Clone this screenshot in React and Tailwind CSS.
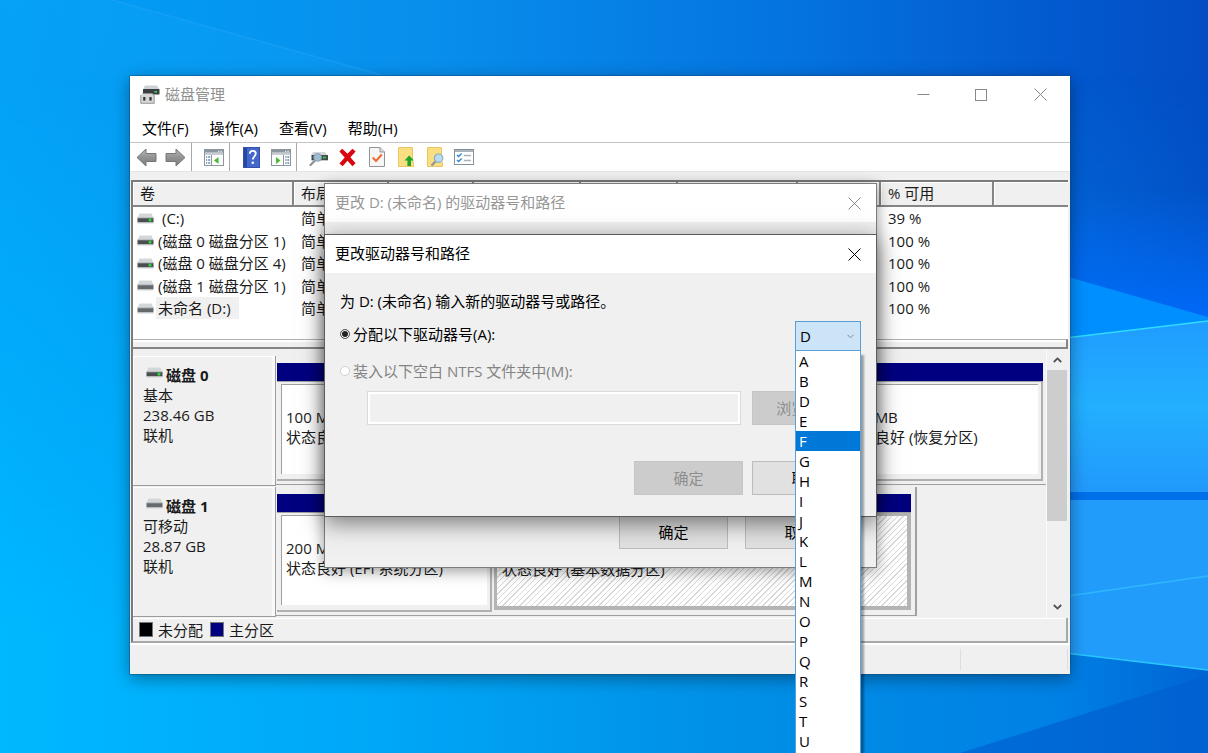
import { useState } from "react";

const FONT = "font-['Open_Sans','Noto_Sans_CJK_SC',sans-serif]";

function Wallpaper() {
  return (
    <svg className="absolute inset-0 h-full w-full" viewBox="0 0 1208 753" preserveAspectRatio="none" aria-hidden="true">
      <defs>
        <linearGradient id="base" x1="0" y1="0" x2="1" y2="0">
          <stop offset="0" stopColor="#00a0f6" />
          <stop offset="0.35" stopColor="#088fec" />
          <stop offset="0.65" stopColor="#0474e0" />
          <stop offset="0.88" stopColor="#0359cf" />
          <stop offset="1" stopColor="#034dc3" />
        </linearGradient>
        <linearGradient id="low" x1="0" y1="0" x2="1" y2="0">
          <stop offset="0" stopColor="#00b8ff" />
          <stop offset="0.3" stopColor="#00a8f8" />
          <stop offset="0.6" stopColor="#0090e6" />
          <stop offset="0.88" stopColor="#0080e4" />
          <stop offset="1" stopColor="#0064d4" />
        </linearGradient>
        <linearGradient id="fade" x1="0" y1="0" x2="0" y2="1">
          <stop offset="0.1" stopColor="#fff" stopOpacity="0" />
          <stop offset="0.85" stopColor="#fff" />
        </linearGradient>
        <mask id="down"><rect width="1208" height="753" fill="url(#fade)" /></mask>
        <linearGradient id="corner" x1="0" y1="0" x2="0" y2="1">
          <stop offset="0" stopColor="#20b0ff" stopOpacity="0.14" />
          <stop offset="1" stopColor="#20b0ff" stopOpacity="0" />
        </linearGradient>
        <linearGradient id="glow" x1="0" y1="0" x2="0" y2="1">
          <stop offset="0" stopColor="#006cff" stopOpacity="0" />
          <stop offset="1" stopColor="#006cff" />
        </linearGradient>
        <linearGradient id="pane" x1="0" y1="0" x2="0" y2="1">
          <stop offset="0" stopColor="#209cff" />
          <stop offset="0.5" stopColor="#22b0ff" />
          <stop offset="1" stopColor="#2299fc" />
        </linearGradient>
      </defs>
      <rect width="1208" height="753" fill="url(#base)" />
      <rect width="1208" height="753" fill="url(#low)" mask="url(#down)" />
      <path d="M0 0H112L385 76V500H0Z" fill="url(#corner)" />
      <path d="M112 0L385 76" stroke="#30a8f8" strokeWidth="1.5" opacity="0.35" />
      <rect x="1040" y="190" width="168" height="150" fill="url(#glow)" />
      <path d="M1040 269L1208 317V322L1040 342Z" fill="#008fff" />
      <path d="M1040 341L1208 321V492H1040Z" fill="url(#pane)" />
      <path d="M1040 341L1208 321" stroke="#2fdcff" strokeWidth="1.5" />
      <rect x="1040" y="492" width="168" height="8" fill="#0070ea" />
      <path d="M1040 500H1208V670L1040 650Z" fill="#229cfb" />
      <path d="M1040 600L1208 576" stroke="#2db8ff" strokeWidth="1.5" />
      <path d="M1040 650L1208 670" stroke="#28c8ff" strokeWidth="1.5" />
      <path d="M960 753L1208 675V753Z" fill="#005fd0" opacity="0.7" />
    </svg>
  );
}

function CloseIcon({ color }) {
  return (
    <svg width="13" height="13" viewBox="0 0 13 13" fill="none" stroke={color} strokeWidth="1" aria-hidden="true">
      <path d="M0.5 0.5L12.5 12.5M12.5 0.5L0.5 12.5" />
    </svg>
  );
}

function DriveIcon({ led }) {
  return (
    <svg width="17" height="11" viewBox="0 0 17 11" className="shrink-0" aria-hidden="true">
      <path d="M2.5 0.5H14.5L16.5 5H0.5Z" fill="#d3d7da" />
      <rect x="0.5" y="5" width="16" height="4.5" fill={led ? "#4b4e50" : "#66696b"} />
      <path d="M0.5 4.8H16.5" stroke="#b4b8ba" />
      <path d="M0.5 10H16.5" stroke="#d0d3d4" />
      {led && <path d="M11.4 7.2H14.6M13 5.6V8.8" stroke="#28e53c" strokeWidth="1.3" />}
    </svg>
  );
}

function AppIcon() {
  return (
    <svg width="20" height="19" viewBox="0 0 20 19" aria-hidden="true">
      <path d="M5 0.5H17L19.5 4.5H3Z" fill="#cfd2d4" />
      <rect x="3" y="4" width="16.5" height="5.5" rx="0.5" fill="#3b3e40" />
      <path d="M14.4 6.8H17" stroke="#2ce04a" strokeWidth="1.6" />
      <path d="M2.5 8.5H12.5V10H14.5V18.5H0.5V10H2.5Z" fill="#d6d6d6" />
      <path d="M0.8 10V18.3H14.2V10" fill="none" stroke="#9a9a9a" />
      <path d="M2.5 8.5H12.5" stroke="#8f8f8f" />
      <rect x="3.2" y="12" width="2.2" height="3.6" fill="#333" />
      <rect x="9.4" y="12" width="2.2" height="3.6" fill="#333" />
    </svg>
  );
}

function ArrowIcon({ flip }) {
  return (
    <svg width="21" height="19" viewBox="0 0 21 19" aria-hidden="true">
      <defs>
        <linearGradient id={flip ? "arR" : "arL"} x1="0" y1="0" x2="0" y2="1">
          <stop offset="0" stopColor="#b8b8b8" />
          <stop offset="0.5" stopColor="#929292" />
          <stop offset="1" stopColor="#7e7e7e" />
        </linearGradient>
      </defs>
      <path
        d={flip ? "M20 9.5L11 1V5.5H1V13.5H11V18Z" : "M1 9.5L10 1V5.5H20V13.5H10V18Z"}
        fill={flip ? "url(#arR)" : "url(#arL)"}
        stroke="#777"
        strokeLinejoin="round"
      />
    </svg>
  );
}

function PaneIcon({ flip }) {
  return (
    <svg width="20" height="19" viewBox="0 0 20 19" aria-hidden="true">
      <rect x="0.5" y="1.5" width="19" height="16" fill="#fff" stroke="#8b979f" />
      <rect x="1" y="2" width="18" height="2.6" fill="#8a979f" />
      <path d="M14 3.3H15.2M16.4 3.3H17.8" stroke="#fff" />
      <path d="M1 6H19" stroke="#b8c0c6" strokeWidth="1.6" />
      {flip ? (
        <>
          <path d="M12.5 7V17.5" stroke="#8b979f" />
          <path d="M5 9V16L9.5 12.5Z" fill="#4cb832" />
          <path d="M14.3 9H15.6M14.3 12H15.6M14.3 15H15.6M16.4 9H18.2M16.4 12H18.2M16.4 15H18.2" stroke="#5b84a5" strokeWidth="1.4" />
        </>
      ) : (
        <>
          <path d="M7.5 7V17.5" stroke="#8b979f" />
          <path d="M14.5 9V16L10 12.5Z" fill="#4cb832" />
          <path d="M2 9H3.2M2 12H3.2M2 15H3.2M4.2 9H6.2M4.2 12H6.2M4.2 15H6.2" stroke="#5b84a5" strokeWidth="1.4" />
        </>
      )}
    </svg>
  );
}

function HelpIcon() {
  return (
    <svg width="17" height="21" viewBox="0 0 17 21" aria-hidden="true">
      <rect x="0.5" y="0.5" width="16" height="20" fill="#4467cc" stroke="#3450a8" />
      <rect x="1" y="1" width="3" height="19" fill="#2747a5" />
      <path d="M6.8 6.8C6.8 4.6 8.2 3.8 9.7 3.8C11.6 3.8 12.8 4.9 12.8 6.6C12.8 9.2 9.8 9.4 9.8 12.6" fill="none" stroke="#fff" strokeWidth="1.8" />
      <circle cx="9.8" cy="15.8" r="1.3" fill="#fff" />
    </svg>
  );
}

function DriveSearchIcon() {
  return (
    <svg width="20" height="19" viewBox="0 0 20 19" aria-hidden="true">
      <path d="M4 4H16L18.5 7.5H2Z" fill="#d5d8da" />
      <rect x="2.5" y="7" width="16.5" height="5" fill="#45494b" />
      <path d="M2.5 12.5H19" stroke="#c4c8ca" />
      <path d="M14 9.5H17" stroke="#28d044" strokeWidth="1.8" />
      <path d="M6 12.5L1.5 17" stroke="#8a8f93" strokeWidth="2.2" strokeLinecap="round" />
      <circle cx="8.6" cy="9.4" r="3.9" fill="#9dbdd2" stroke="#8aa0b0" />
    </svg>
  );
}

function DeleteIcon() {
  return (
    <svg width="19" height="19" viewBox="0 0 19 19" aria-hidden="true">
      <path d="M4.2 0.8L9.5 5.8L14.4 0.8L17.6 3.4L12.4 9.2L17.6 15.2L14.4 18.2L9.5 12.7L4.6 18.2L1.4 15.4L6.7 9.4L1.4 3.6Z" fill="#d8060f" />
    </svg>
  );
}

function CheckDocIcon() {
  return (
    <svg width="16" height="20" viewBox="0 0 16 20" aria-hidden="true">
      <path d="M0.5 0.5H11L15.5 5V19.5H0.5Z" fill="#f6f6f6" stroke="#939393" />
      <path d="M11 0.5V5H15.5" fill="#ddd" stroke="#939393" />
      <path d="M3.8 10.5L7 14L12.8 7.5" fill="none" stroke="#ee6a32" strokeWidth="2" />
    </svg>
  );
}

function FolderUpIcon() {
  return (
    <svg width="18" height="20" viewBox="0 0 18 20" aria-hidden="true">
      <path d="M1.5 0.5H15.5V15.5H16.5V19.5H1.5Z" fill="#f9de82" stroke="#e8c768" />
      <path d="M12.2 8.5L16.8 13.5H14V19H10.4V13.5H7.6Z" fill="#1fa326" />
    </svg>
  );
}

function FolderSearchIcon() {
  return (
    <svg width="18" height="20" viewBox="0 0 18 20" aria-hidden="true">
      <path d="M1.5 0.5H15.5V15.5H16.5V19.5H1.5Z" fill="#f9de82" stroke="#e8c768" />
      <path d="M10 14L5.5 18.5" stroke="#8d9296" strokeWidth="2.2" />
      <circle cx="12.6" cy="11.2" r="4.2" fill="#b9dcf2" stroke="#8fadc2" strokeWidth="1.2" />
    </svg>
  );
}

function ChecklistIcon() {
  return (
    <svg width="20" height="16" viewBox="0 0 20 16" aria-hidden="true">
      <rect x="0.5" y="0.5" width="19" height="15" fill="#fff" stroke="#84909a" />
      <rect x="1" y="1" width="18" height="2" fill="#aab4bc" />
      <path d="M3 6L4.6 7.5L7.6 4.4M3 11L4.6 12.5L7.6 9.4" fill="none" stroke="#2f86dc" strokeWidth="1.4" />
      <path d="M10 6.5H17M10 11.5H17" stroke="#aab1b6" strokeWidth="1.4" />
    </svg>
  );
}

function ToolButton({ label, children }) {
  return (
    <button type="button" aria-label={label} className="flex h-7 w-[29px] items-center justify-center">
      {children}
    </button>
  );
}

function ToolSeparator() {
  return <div className="ml-px h-7 w-2 border-l border-[#a8a8a8]" />;
}

const COLUMNS = ["卷", "布局", "类型", "文件系统", "状态", "容量", "可用空间", "% 可用", ""];
const VOLUMES = [
  { name: "(C:)", led: true, free: "39 %", indent: true },
  { name: "(磁盘 0 磁盘分区 1)", led: true, free: "100 %" },
  { name: "(磁盘 0 磁盘分区 4)", led: true, free: "100 %" },
  { name: "(磁盘 1 磁盘分区 1)", led: false, free: "100 %" },
  { name: "未命名 (D:)", led: false, free: "100 %", selected: true },
];

function VolumeTable() {
  return (
    <div className="ml-px mr-0.5 border-l-2 border-t-2 border-[#7b7b7b] bg-white">
      <table className="w-full table-fixed border-collapse text-left whitespace-nowrap">
        <colgroup>
          <col className="w-[161px]" />
          <col className="w-[95px]" />
          <col className="w-[85px]" />
          <col className="w-[107px]" />
          <col className="w-[97px]" />
          <col className="w-[120px]" />
          <col className="w-[83px]" />
          <col className="w-[113px]" />
          <col />
        </colgroup>
        <thead>
          <tr className="h-[25px]">
            {COLUMNS.map((c, i) => (
              <th key={i} scope="col" className="p-0 font-normal">
                <div
                  className={
                    "h-[25px] overflow-hidden border-b-2 border-[#858585] bg-[#f0f0f0] pl-[7px] leading-[23px] shadow-[inset_1px_1px_0_#fff] " +
                    (i < 8 ? "border-r-2" : "")
                  }
                >
                  {c}
                </div>
              </th>
            ))}
          </tr>
        </thead>
        <tbody className="leading-[22px]">
          {VOLUMES.map((v) => (
            <tr key={v.name} className="h-[22px] even:h-[23px]">
              <td className="p-0">
                <div className="flex items-center gap-0.5 pl-1">
                  <DriveIcon led={v.led} />
                  <span className={v.selected ? "bg-[#f0f0f0] pl-0.5 pr-2" : v.indent ? "pl-1.5" : "pl-0.5"}>{v.name}</span>
                </div>
              </td>
              <td className="p-0 pl-[7px]">简单</td>
              <td className="p-0" />
              <td className="p-0" />
              <td className="p-0" />
              <td className="p-0" />
              <td className="p-0" />
              <td className="p-0 pl-[7px]">{v.free}</td>
              <td className="p-0" />
            </tr>
          ))}
        </tbody>
      </table>
      <div className="h-5" />
      <div className="h-[10px] border-b-2 border-r-2 border-t border-[#858585] border-t-[#b0b0b0] bg-[#f0f0f0] shadow-[inset_0_2px_0_#fff]" />
    </div>
  );
}

function Partition({ size, status, selected, className }) {
  return (
    <div className={"flex flex-col " + className}>
      <div className="h-[19px] border-b border-[#a0a0a0] bg-[#000080]" />
      {selected ? (
        <div className="flex h-[97px] border-[3px] border-[#b4b4b4] border-b-4 border-r-4">
          <div className="flex-1 bg-[repeating-linear-gradient(135deg,#fff_0px,#fff_3px,#d8d8d8_3px,#d8d8d8_4px)] pl-[5px] pt-[23px] leading-5 whitespace-nowrap">
            <div>{size}</div>
            <div>{status}</div>
          </div>
        </div>
      ) : (
        <div className="flex h-[99px] border-b-2 border-r-2 border-[#b0b0b0] pb-[5px] pl-1 pr-[3px] pt-0.5">
          <div className="flex-1 overflow-hidden border-l border-t border-[#a0a0a0] bg-white pl-1 pt-[22px] leading-5 whitespace-nowrap">
            <div>{size}</div>
            <div>{status}</div>
          </div>
        </div>
      )}
    </div>
  );
}

function DiskRow({ name, led, kind, capacity, children, className }) {
  return (
    <div className="flex h-[131px] items-start">
      <div className="h-[130px] w-[143px] shrink-0 border-b border-r border-[#9c9c9c] pl-2.5 pt-[9px] leading-5 shadow-[inset_1px_1px_0_#fff,inset_-3px_0_0_#f8f8f8]">
        <div className="flex items-center gap-[3px] pl-[3px] font-bold">
          <div className="pb-1.5">
            <DriveIcon led={led} />
          </div>
          {name}
        </div>
        <div>{kind}</div>
        <div>{capacity}</div>
        <div>联机</div>
      </div>
      <div className={"flex h-[129px] gap-0.5 border-b border-[#a0a0a0] pl-px pt-[7px] " + className}>{children}</div>
    </div>
  );
}

function DiskGraph() {
  return (
    <div className="ml-px mr-0.5 flex border-l-2 border-[#7b7b7b] bg-[#f0f0f0]">
      <div className="flex-1 pt-[7px]">
        <DiskRow name="磁盘 0" led kind="基本" capacity="238.46 GB" className="flex-1 pr-[3px]">
          <Partition size="100 MB" status="状态良好 (EFI 系统分区)" className="w-[215px]" />
          <Partition size="" status="" className="flex-1" />
          <Partition size="505 MB" status="状态良好 (恢复分区)" className="w-[207px]" />
        </DiskRow>
        <DiskRow name="磁盘 1" kind="可移动" capacity="28.87 GB" className="mr-[129px] flex-1 border-r-2 pr-1">
          <Partition size="200 MB" status="状态良好 (EFI 系统分区)" className="w-[215px]" />
          <Partition size="28.67 GB NTFS" status="状态良好 (基本数据分区)" selected className="flex-1" />
        </DiskRow>
      </div>
      <div className="flex w-[22px] flex-col items-center border-l border-[#fafafa] pr-px">
        <button type="button" aria-label="向上滚动" className="flex h-[21px] w-5 items-center justify-center">
          <svg width="9" height="6" viewBox="0 0 9 6" fill="none" stroke="#505050" strokeWidth="1.8" aria-hidden="true">
            <path d="M0.8 5L4.5 1.4L8.2 5" />
          </svg>
        </button>
        <div className="h-[151px] w-5 bg-[#cdcdcd]" />
        <div className="flex-1" />
        <button type="button" aria-label="向下滚动" className="flex h-[22px] w-5 items-center justify-center">
          <svg width="9" height="6" viewBox="0 0 9 6" fill="none" stroke="#505050" strokeWidth="1.8" aria-hidden="true">
            <path d="M0.8 1L4.5 4.6L8.2 1" />
          </svg>
        </button>
      </div>
    </div>
  );
}

function DialogTitle({ children, active }) {
  return (
    <div className="flex h-[38px] items-center justify-between bg-white pl-2.5">
      <h2 className={"pb-0.5 " + (active ? "text-black" : "text-[#979797]")}>{children}</h2>
      <button type="button" aria-label="关闭" className="flex h-[38px] w-[43px] items-center justify-center">
        <CloseIcon color={active ? "#000" : "#8a8a8a"} />
      </button>
    </div>
  );
}

function PushButton({ children, disabled }) {
  return (
    <button
      type="button"
      disabled={disabled}
      className={
        "h-[34px] w-[109px] shrink-0 border " +
        (disabled ? "border-[#c6c6c6] bg-[#cccccc] text-[#8e8e8e]" : "border-[#bcbcbc] bg-[#e1e1e1] text-black")
      }
    >
      {children}
    </button>
  );
}

const LETTERS = "ABDEFGHIJKLMNOPQRSTUVWXYZ".split("");

function LetterPicker() {
  const [letter, setLetter] = useState("D");
  return (
    <div className="relative z-10 w-[66px]">
      <select
        aria-label="驱动器号"
        value={letter}
        onChange={(e) => setLetter(e.target.value)}
        className="block h-[30px] w-full appearance-none border border-[#5a9fd4] bg-[#cce4f7] pl-1 text-black"
      >
        {LETTERS.map((l) => (
          <option key={l}>{l}</option>
        ))}
      </select>
      <svg className="pointer-events-none absolute right-[7px] top-[13px]" width="7" height="5" viewBox="0 0 7 5" fill="none" stroke="#7d8a96" aria-hidden="true">
        <path d="M0.5 0.8L3.5 3.8L6.5 0.8" />
      </svg>
      <ul role="listbox" aria-label="可用驱动器号" className="absolute left-0 top-[30px] w-full border-x border-[#5aa0dc] bg-white leading-5 shadow-[3px_4px_2px_rgba(0,0,0,0.35)]">
        {LETTERS.map((l) => (
          <li key={l} role="option" aria-selected={l === "F"} className={"h-5 pl-[3px] " + (l === "F" ? "bg-[#0078d7] text-white" : "text-black")}>
            {l}
          </li>
        ))}
      </ul>
    </div>
  );
}

const RADIO =
  "h-2.5 w-2.5 appearance-none rounded-full border border-[#666] bg-white checked:bg-[#222] checked:shadow-[inset_0_0_0_1px_#fff] disabled:border-[#d0d0d0]";

export default function App() {
  return (
    <div className={"relative min-h-screen overflow-hidden bg-[#0090ee] pb-[79px] pl-[130px] pr-[138px] pt-[76px] text-[15px] leading-5 text-[#1a1a1a] " + FONT}>
      <Wallpaper />
      <main className="relative bg-[#f0f0f0] shadow-[0_0_0_1px_rgba(20,70,120,0.45),0_4px_16px_rgba(0,0,0,0.4)]">
        <header className="flex h-[37px] items-center bg-white pl-2.5">
          <AppIcon />
          <h1 className="ml-[5px] flex-1 pb-0.5 text-[#8f8f8f]">磁盘管理</h1>
          <button type="button" aria-label="最小化" className="flex h-9 w-[58px] items-center justify-center">
            <svg width="13" height="13" viewBox="0 0 13 13" stroke="#8a8a8a" aria-hidden="true"><path d="M0.5 6.5H12.5" /></svg>
          </button>
          <button type="button" aria-label="最大化" className="flex h-9 w-[58px] items-center justify-center">
            <svg width="13" height="13" viewBox="0 0 13 13" fill="none" stroke="#8a8a8a" aria-hidden="true"><rect x="0.5" y="1.5" width="11" height="11" /></svg>
          </button>
          <button type="button" aria-label="关闭" className="flex h-9 w-[60px] items-center justify-center">
            <CloseIcon color="#8a8a8a" />
          </button>
        </header>
        <nav className="flex h-[30px] items-center gap-[21px] border-b border-[#c4c4c4] bg-white pl-3 text-black">
          <button type="button">文件(F)</button>
          <button type="button">操作(A)</button>
          <button type="button">查看(V)</button>
          <button type="button">帮助(H)</button>
        </nav>
        <div className="mb-2 flex h-[29px] items-end border-b border-[#e4e4e4] bg-white pl-0.5">
          <ToolButton label="后退"><ArrowIcon /></ToolButton>
          <ToolButton label="前进"><ArrowIcon flip /></ToolButton>
          <ToolSeparator />
          <ToolButton label="控制台树"><PaneIcon /></ToolButton>
          <ToolSeparator />
          <ToolButton label="帮助"><HelpIcon /></ToolButton>
          <ToolButton label="操作窗格"><PaneIcon flip /></ToolButton>
          <ToolSeparator />
          <ToolButton label="重新扫描"><DriveSearchIcon /></ToolButton>
          <ToolButton label="删除"><DeleteIcon /></ToolButton>
          <ToolButton label="属性"><CheckDocIcon /></ToolButton>
          <ToolButton label="打开"><FolderUpIcon /></ToolButton>
          <ToolButton label="浏览"><FolderSearchIcon /></ToolButton>
          <ToolButton label="设置"><ChecklistIcon /></ToolButton>
        </div>

        <VolumeTable />
        <DiskGraph />

        <div className="ml-px mr-0.5 flex h-[25px] items-center border-b-2 border-l-2 border-r-2 border-[#a8a8a8] border-l-[#7b7b7b] pl-1.5 shadow-[inset_0_1px_0_#fff]">
          <span className="h-[15px] w-3.5 border border-[#777] bg-black" />
          <span className="ml-[5px]">未分配</span>
          <span className="ml-[7px] h-[15px] w-3.5 border border-[#777] bg-[#000080]" />
          <span className="ml-[5px]">主分区</span>
        </div>
        <footer className="flex h-[31px] justify-end border-t-2 border-white py-1 pr-0.5">
          <div className="w-[108px] border-x border-[#dedede]" />
        </footer>

        <section
          role="dialog"
          aria-label="更改 D: (未命名) 的驱动器号和路径"
          className="absolute left-[194px] top-[107px] flex h-[385px] w-[553px] flex-col border border-[#7c7c7c] bg-[#f0f0f0] shadow-[0_3px_14px_rgba(0,0,0,0.4)]"
        >
          <DialogTitle>更改 D: (未命名) 的驱动器号和路径</DialogTitle>
          <div className="flex-1" />
          <div className="flex justify-end gap-[17px] pb-[18px] pr-[22px]">
            <PushButton>确定</PushButton>
            <PushButton>取消</PushButton>
          </div>
        </section>

        <section
          role="dialog"
          aria-label="更改驱动器号和路径"
          className="absolute left-[194px] top-[158px] w-[553px] border border-[#5c5c5c] bg-[#f0f0f0] text-black shadow-[0_6px_22px_rgba(0,0,0,0.5)]"
        >
          <DialogTitle active>更改驱动器号和路径</DialogTitle>
          <form className="px-[15px] pb-[21px] pt-[18px]" onSubmit={(e) => e.preventDefault()}>
            <p>为 D: (未命名) 输入新的驱动器号或路径。</p>
            <div className="mt-2.5 flex h-[30px] items-center justify-between">
              <label className="flex items-center gap-[3px] pb-1">
                <input type="radio" name="target" defaultChecked className={RADIO} />
                分配以下驱动器号(A):
              </label>
              <LetterPicker />
            </div>
            <label className="mt-2.5 flex items-center gap-[3px] text-[#838383]">
              <input type="radio" name="target" disabled className={RADIO} />
              装入以下空白 NTFS 文件夹中(M):
            </label>
            <div className="mt-2.5 flex gap-[11px] pl-[27px]">
              <input
                type="text"
                aria-label="文件夹路径"
                disabled
                className="h-[34px] min-w-0 flex-1 border border-[#dadada] bg-[#f0f0f0] shadow-[inset_0_0_0_2px_#fff]"
              />
              <PushButton disabled>浏览(B)...</PushButton>
            </div>
            <div className="mt-9 flex justify-end gap-[9px]">
              <PushButton disabled>确定</PushButton>
              <PushButton>取消</PushButton>
            </div>
          </form>
        </section>
      </main>
    </div>
  );
}
